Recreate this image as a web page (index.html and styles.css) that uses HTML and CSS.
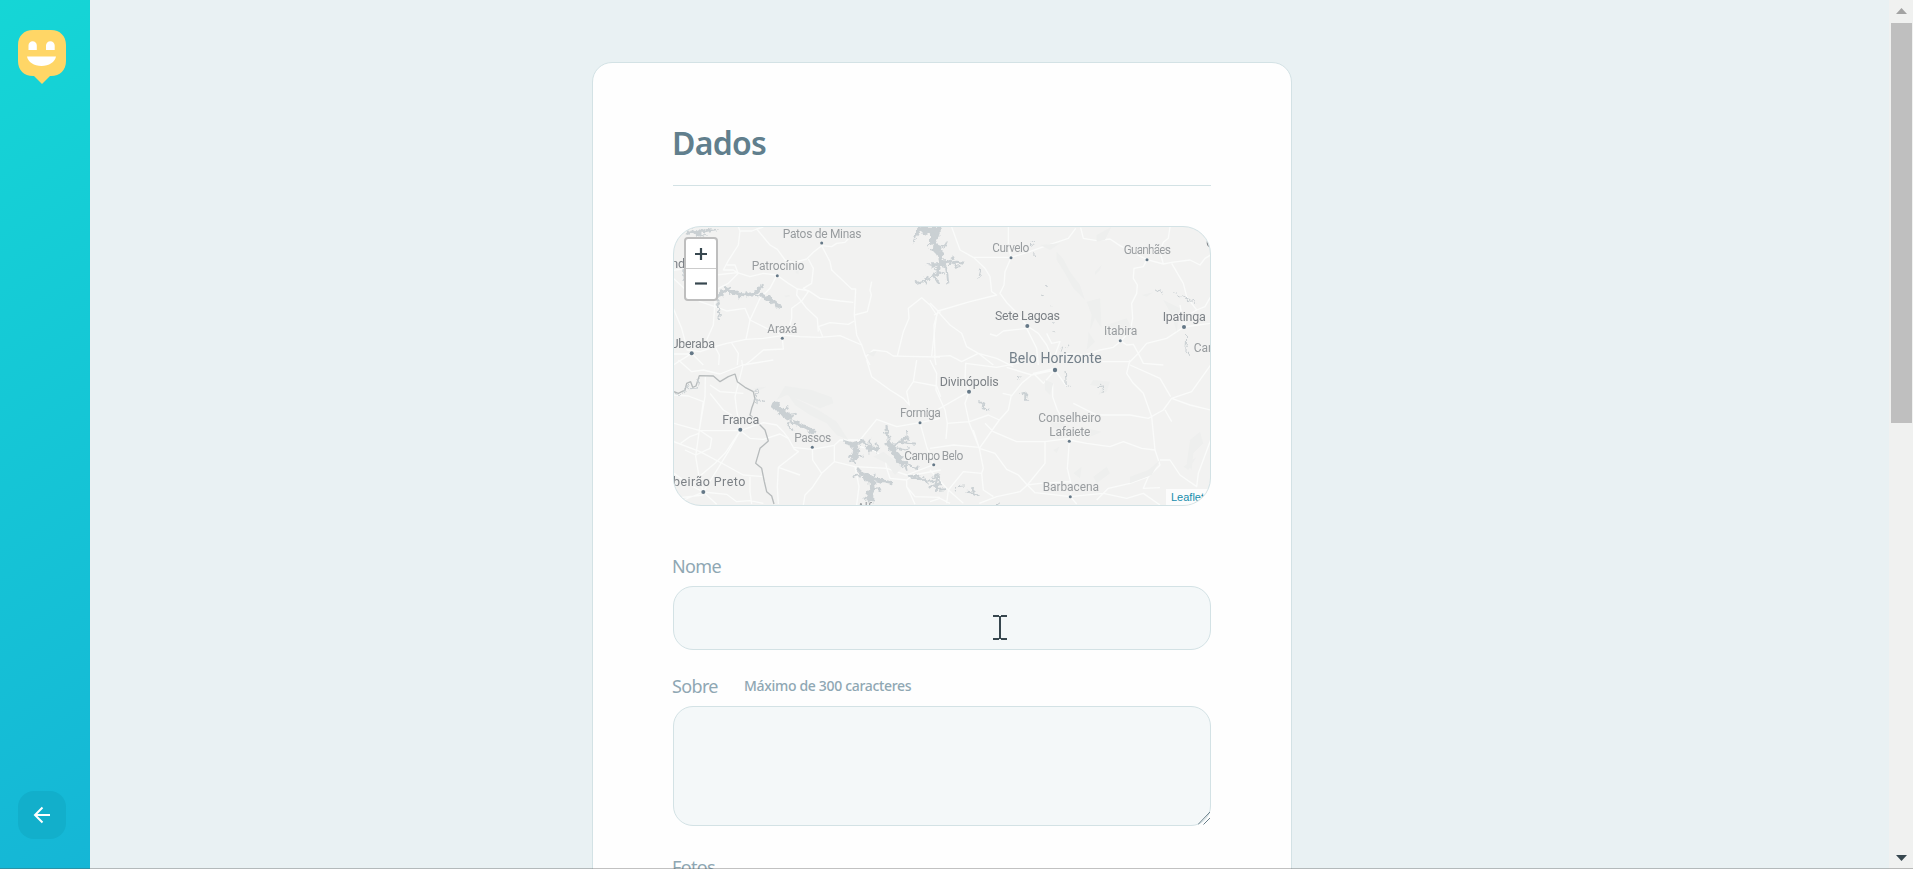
FILE: index.html
```html
<!DOCTYPE html>
<html lang="pt-BR">
<head>
<meta charset="utf-8">
<title>Happy</title>
<link rel="stylesheet" href="styles.css">
</head>
<body>
<div class="page">
  <aside class="sidebar">
    <svg class="logo" width="48" height="54" viewBox="0 0 48 54">
      <path fill="#ffd666" d="M15 0H33C42 0 48 6 48 15V31C48 40 42 46 33 46H32L24 54L16 46H15C6 46 0 40 0 31V15C0 6 6 0 15 0Z"/>
      <path fill="#fff" d="M10.5 20V15.5a4 4 0 0 1 8.300 0V20ZM28 20V15.500a4.200 4.200 0 0 1 8.700 0V20ZM9 26.500H38C37 32 31 36 23.500 36S10 32 9 26.500Z"/>
    </svg>
    <button class="back" type="button" aria-label="Voltar">
      <svg width="24" height="24" viewBox="0 0 24 24"><path d="M20 12H4.500M12.500 4.500L5 12L12.500 19.500"/></svg>
    </button>
  </aside>

  <main class="content">
    <form class="card">
      <h1 class="title">Dados</h1>
      <div class="map">
        <svg class="tiles" viewBox="674 227 536 278">
          <defs>
            <filter id="shore" x="-5%" y="-5%" width="110%" height="110%">
              <feTurbulence type="fractalNoise" baseFrequency=".22" numOctaves="2" seed="4"/>
              <feDisplacementMap in="SourceGraphic" scale="6" xChannelSelector="R" yChannelSelector="G"/>
            </filter>
          </defs>
          <!-- north-west -->
          <g transform="translate(660 215) scale(.33333)">
            <g class="road">
              <path d="M235 35L240 48L276 48L290 42L330 90L352 103L375 135L400 143L440 132L460 112L485 92L515 95L530 85L555 82L575 60L600 50"/>
              <path d="M290 42L310 36M240 48L235 90L205 137L190 165L220 165L235 175L205 205L175 220L165 260L160 330L140 375L125 400"/>
              <path d="M485 92L510 140L515 165L575 222L587 222L583 300L590 360L605 390L617 425L640 405L680 410L700 423L740 424L840 426"/>
              <path d="M635 200L630 225L634 240L622 290L583 300M583 318L565 328L510 323L475 335L480 345L488 365"/>
              <path d="M168 180L232 173L270 185L310 175L350 180L385 205L412 222L445 227L480 250L540 258L580 262"/>
              <path d="M445 132L460 160L455 205L430 220L445 230L425 258L395 280L395 310L385 345L367 362"/>
              <path d="M412 222L410 240L440 280L472 310L475 350M350 182L330 220L300 250L270 315L258 373"/>
              <path d="M40 190L78 225L120 260L165 275L200 288L255 280L270 315L320 340L367 360L420 365L480 367L540 362L605 390"/>
              <path d="M40 280L65 340L82 405L120 410L165 395L200 385L258 373L310 370L367 362M367 370L370 402L310 405L275 435L255 450"/>
              <path d="M95 415L130 450M95 415L40 450M42 417H95M165 395L178 420L176 450M215 384L235 415L232 450M617 425L630 450M712 423L730 350L747 310L745 280L785 248L810 270L830 300L824 345L815 423M822 300L842 290M823 420L828 450M40 166L80 160M200 150H225L234 174"/>
            </g>
            <path class="terrain" d="M372 242L388 239L390 244L377 247ZM405 170L417 165L415 178ZM620 415L650 408L640 425Z"/>
          </g>
          <!-- north-east -->
          <g transform="translate(930 215) scale(.33333)">
            <g class="road">
              <path d="M65 36L90 105L130 127H243L290 113L350 92L415 70L437 40M235 36V90L243 128L225 170L222 210L210 235L232 265L252 285L292 333L325 355L350 390L375 450"/>
              <path d="M130 127L165 160L180 185L185 230L200 240L120 260L24 288L0 264M24 288L12 330L15 425L60 422L95 440L145 415L190 450M24 290L60 330L95 355L110 395L145 415L200 430L250 455"/>
              <path d="M180 357L200 363L220 348L290 340L320 400L325 450M452 38L460 70L500 77L540 72L570 92L651 134L700 147L725 142L780 135L810 150L825 130L842 120M720 36L715 70L700 82L690 110L700 147M725 145L760 205L770 245L800 285L825 275L842 245"/>
              <path d="M651 134L640 155L612 160L610 190L622 210L620 235L605 265L608 310L600 350L570 380L550 397L510 405L465 420L400 415M571 377L590 390L610 388L625 415L650 385L710 370L762 336L842 325M762 336L775 300L800 285M762 336L750 270M625 415L640 445L700 450M625 415L600 440L515 440M375 420L390 380L365 385L350 355"/>
            </g>
            <path class="terrain" d="M380 110L400 132L420 170L450 210L465 255L430 220L405 175L380 135ZM470 260L510 250L515 340L495 310L480 345L485 300ZM330 90L390 85L360 105ZM500 60L545 35L525 75L500 80ZM700 255L750 280L740 350L725 300ZM530 330L590 310L610 350L550 360ZM475 350L495 380L470 405L475 370ZM495 170L515 150L510 165L495 180ZM635 240L670 232L650 245Z"/>
          </g>
          <!-- south-west -->
          <g transform="translate(660 360) scale(.33333)">
            <g class="road">
              <path d="M136 50L135 110L118 210L107 290L117 350L130 396L205 275L241 212L230 150L225 110L248 20L245 0M42 105L85 108L130 125L118 210M42 190L120 212H241L270 235L310 238L360 222L385 235L400 262L457 268L523 256L540 240H600L650 178L710 200L780 188L840 175"/>
              <path d="M42 245L120 275L190 312L250 345L310 350M117 350L165 310L195 280L241 212M62 250L90 230L117 220M118 210L155 235L150 265L107 285L75 270M55 0L95 35L130 30L180 42L248 15L340 0M250 100L180 95L150 75M150 100L190 150L215 165M241 212L275 200L310 188L350 195L370 215L385 235"/>
              <path d="M400 265L415 275L355 322L352 380L355 432M355 322L420 345M457 262L458 300L485 340L455 385L435 405L430 435M523 256V305L485 340M523 305L585 320L680 325M585 320L597 380L590 435M620 0L635 50L690 90L730 115L748 135L740 95L760 65L770 0M760 65L830 78L842 110M780 188L800 260L821 314L740 345L680 325L675 295L640 270L600 260M680 325L690 355L740 360V380L765 410L840 412M740 360L760 345L842 330M740 380L750 400L765 433M130 396L42 432M130 396L170 433M130 396L200 403L230 425L270 422L310 430M270 350V395L275 432M42 340L90 375L130 396M42 415L130 405"/>
            </g>
            <path class="terrain" d="M375 78L455 90L515 112L520 130L480 145L420 120L380 105L350 120ZM385 105L475 150L530 185L565 240L530 225L500 190L450 165L405 135ZM640 290L670 275L730 320L705 345L680 310ZM280 85L320 80L300 90Z"/>
            <path class="river border" d="M42 95L55 100L75 90L80 70L92 65L98 82L108 78L118 47L160 48L180 65L205 50L225 42L232 65L255 82L280 95L285 118L275 145L270 165L300 195L315 210L325 243L300 265L287 310L305 325L313 365L320 395L335 408L342 432"/>
          </g>
          <!-- south-east -->
          <g transform="translate(930 360) scale(.33333)">
            <g class="road">
              <path d="M0 0L20 40L18 90L45 150L52 190L48 237M0 162L117 95L105 60L107 10L200 22L260 10L300 0M117 95L105 130L118 190L148 265L130 210M52 190L118 185L175 165L208 180L235 150L243 110L275 70L305 45L375 30L410 80M375 30L340 70L310 40L375 25M230 22L305 45M218 100L248 107"/>
              <path d="M208 180L148 265L160 325L155 340L100 335L55 390L50 430M148 265L195 280L230 328L265 345L292 375L345 310V245L260 245L190 215L165 190M345 245L418 235L410 200L382 150L368 110V70M418 240L470 250L540 260L580 245L635 265L675 270L665 170L640 100L610 70L590 40L600 0M430 130L500 165L600 165L655 175L700 150L725 115L785 95L842 15M725 115L780 135L842 150M600 15L690 55L722 110M705 150L725 185M418 244L412 325L425 380L421 410L440 432M421 410L520 400L590 415L640 400L690 435M292 375L270 395L200 410L148 430M292 375L330 370L420 365M292 375L315 398L421 410M675 270L690 315L655 350L640 385L690 383M690 300L720 300L750 345L800 380L805 340L842 240M655 350L600 370L535 385L500 420M155 340L160 390L190 410M55 390L100 430M55 390L0 330M0 265L70 255L148 262M0 425L30 415L60 430"/>
            </g>
            <path class="terrain" d="M490 60L540 65L530 95L505 105L515 80L480 75ZM780 240L810 215L820 250L790 280L785 330L770 310ZM455 200L515 215L470 235ZM345 60L370 70L360 105L345 90ZM600 350L655 330L690 300L665 345L600 370ZM490 350L530 320L540 340L500 370ZM370 270L388 260L380 280ZM355 180L420 195L410 220L370 205ZM760 320L800 290L775 330ZM430 340L455 320L450 355Z"/>
          </g>
          <!-- reservoirs and rivers -->
          <g filter="url(#shore)">
            <g transform="translate(660 215) scale(.33333)">
              <path class="water" d="M76 44L90 50L98 39L110 48L120 40L135 47L150 40L180 44L150 49L125 54L145 68L126 60L112 65L100 55L85 60ZM765 40L785 35H842V62L815 50L800 60L780 50L755 90L765 60ZM70 160H78V202L70 190Z"/>
              <path class="river thick" d="M170 245L184 240L190 228L200 221L216 230L235 235L250 238L275 237L292 228L300 218M300 239L325 250L345 265L364 278"/>
              <path class="river branch" d="M175 240L172 260L178 280L175 315M195 230L210 215M235 230L238 250M260 228L262 250M280 239L300 245M292 222L310 209M325 240V258M345 265L350 280M205 218L208 240M765 205L800 195L842 170M800 185L795 205M800 148H842M820 180L835 205"/>
            </g>
            <g transform="translate(930 215) scale(.33333)">
              <path class="water" d="M0 36L22 42L28 60L18 75L30 95L38 110L35 125L52 140L46 160L32 155L28 170L15 165L25 145L20 120L8 105L10 90L0 80Z"/>
              <path class="river branch" d="M28 100L45 92L50 80M20 110L0 105M45 145L60 137L75 125M50 145L80 140L104 143M68 142L78 155L95 152M48 155L52 178L55 205M30 165L0 188M25 60L-20 40M25 148L0 155M20 75L-10 95M22 170L42 180"/>
              <path class="river" d="M150 162L145 182L155 175L145 195M677 221L700 235M730 233L752 243M755 245L800 263M770 360L768 410L776 420M335 240L345 243M370 322L375 325M368 348L372 352M300 80H315M300 92L315 88M310 115L315 125M390 410L395 395M410 398L415 392M345 208L350 212M362 270L366 273"/>
            </g>
            <g transform="translate(660 360) scale(.33333)">
              <path class="river" d="M42 100L58 104L80 88L85 72L90 86L112 84L118 52M280 95L295 90L285 118L310 125L314 132M280 120L292 128L290 112"/>
              <path class="river wide" d="M337 132L355 145L365 158L383 168L390 178M580 252L588 270L580 298M680 245L695 262L705 280L720 300L735 315M610 345L635 360L637 385L630 400L630 432"/>
              <path class="river thick" d="M390 182L415 192L440 205L464 218M550 245L575 253L600 248M615 262L660 268M632 355L660 362L700 370M590 325L610 345"/>
              <path class="river branch" d="M337 135L345 122L355 132M365 158L375 150L385 140M345 150L338 140M375 167L410 161M388 190L385 205L402 210M600 250L610 240L630 260M628 237L635 262L625 280M650 250L652 280M565 290H608M568 300L590 305M679 198L687 245L700 260L740 230L738 210M672 215L690 230M715 245L768 251M730 235L750 240M710 265L730 270L752 263M720 300L755 320L775 324M735 310L740 332M635 355L645 340M635 390L655 385L662 395M635 400L612 418M578 350L600 345M745 347L760 353L780 350L800 365L842 360M820 345L835 352L825 380L842 372"/>
            </g>
            <g transform="translate(930 360) scale(.33333)">
              <path class="river branch" d="M145 125L160 130L158 145L178 150M275 105L293 100L285 115L290 122M5 355L25 345L30 370L15 390L45 388M0 375L20 385M110 395L135 400L125 385L145 410"/>
              <path class="river" d="M258 50L270 48L265 62M405 30L410 80M415 80L422 76M505 80L522 78L515 97M75 395L80 380L105 378M198 430L210 434"/>
            </g>
          </g>
          <g class="label">
            <text x="782.700" y="237.700" textLength="78.700">Patos de Minas</text>
            <text x="751.700" y="270.300" textLength="52.700">Patrocínio</text>
            <text x="767.300" y="333" textLength="30">Araxá</text>
            <text x="992.300" y="252.300" textLength="37">Curvelo</text>
            <text x="1123.700" y="254.300" textLength="47.300">Guanhães</text>
            <text x="1104" y="335" textLength="33.300">Itabira</text>
            <text x="1193.700" y="351.700">Caratinga</text>
            <text x="794.300" y="441.700" textLength="37">Passos</text>
            <text x="900" y="417.300" textLength="40.700">Formiga</text>
            <text x="904.300" y="460" textLength="59">Campo Belo</text>
            <text x="1038.300" y="422" textLength="62.700">Conselheiro</text>
            <text x="1049.300" y="436" textLength="41">Lafaiete</text>
            <text x="1042.700" y="491" textLength="56.300">Barbacena</text>
            <text x="857" y="512">Alfenas</text>
          </g>
          <g class="label city">
            <text x="695" y="267.700" text-anchor="end">Uberlândia</text>
            <text x="670.500" y="348.300" textLength="44.500">Uberaba</text>
            <text x="995" y="320" textLength="65">Sete Lagoas</text>
            <text x="1162.700" y="321" textLength="43">Ipatinga</text>
            <text x="722.300" y="424" textLength="37">Franca</text>
            <text x="745.300" y="485.700" text-anchor="end" textLength="84">Ribeirão Preto</text>
            <text x="939.700" y="386" textLength="59">Divinópolis</text>
            <text x="1206" y="247">G</text>
            <text class="capital" x="1009" y="363.300" textLength="92.700">Belo Horizonte</text>
          </g>
          <g class="dot">
            <circle cx="821.700" cy="243" r="1.500"/><circle cx="777.300" cy="275.700" r="1.500"/><circle cx="782.300" cy="338.300" r="1.500"/>
            <circle cx="1011" cy="257.700" r="1.500"/><circle cx="1147" cy="259.700" r="1.500"/><circle cx="1120.300" cy="340.700" r="1.500"/>
            <circle cx="812.300" cy="447.300" r="1.500"/><circle cx="920" cy="422.700" r="1.500"/><circle cx="933.700" cy="464.700" r="1.500"/>
            <circle cx="1069.300" cy="441.300" r="1.500"/><circle cx="1070.300" cy="496.700" r="1.500"/>
            <circle cx="691.700" cy="353.300" r="2"/><circle cx="1027.300" cy="326" r="2"/><circle cx="1184" cy="327" r="2"/>
            <circle cx="1055" cy="370" r="2.200"/><circle cx="740.300" cy="429.700" r="2"/><circle cx="703.300" cy="492" r="2"/><circle cx="969" cy="391.700" r="2"/>
          </g>
        </svg>
        <div class="zoom">
          <span class="zoom-button"><svg width="12" height="12"><path d="M0 6H12M6 0V12"/></svg></span>
          <span class="zoom-button"><svg width="12" height="12"><path d="M0 5.500H12"/></svg></span>
        </div>
        <div class="attribution">Leaflet</div>
      </div>

      <div class="field">
        <label class="caption" for="name"><span class="name">Nome</span></label>
        <input class="control" id="name">
      </div>
      <div class="field">
        <label class="caption" for="about"><span class="name">Sobre</span><span class="hint">Máximo de 300 caracteres</span></label>
        <div class="control area" id="about">
          <svg class="grip" width="12" height="14"><path d="M0 13.500L12 1M5.500 13.500L12 7"/></svg>
        </div>
      </div>
      <div class="field photos">
        <label class="caption"><span class="name">Fotos</span></label>
      </div>
    </form>
  </main>

  <div class="scrollbar">
    <svg width="11" height="6"><path fill="#a3a3a3" d="M0 6L5.500 0L11 6Z"/></svg>
    <div class="thumb"></div>
    <svg class="down" width="11" height="6"><path fill="#37474f" d="M0 0L5.500 6L11 0Z"/></svg>
  </div>
  <svg class="cursor" width="14" height="25"><path d="M0 1H6M8 1H14M7 1V24M0 24H6M8 24H14"/></svg>
  <div class="edge"></div>
</div>
</body>
</html>
```

FILE: styles.css
```css
* { box-sizing: border-box; margin: 0; }
body { overflow: hidden; background: #e9f1f3; font-family: "Noto Sans", "Open Sans", sans-serif; }
.page { position: relative; display: flex; height: 869px; overflow: hidden; }

.sidebar { display: flex; flex-direction: column; align-items: flex-start; justify-content: space-between; width: 90px; padding: 30px 18px; background: linear-gradient(329.54deg, #15b6d6 0%, #15d6d6 100%); }
.logo { display: block; }
.back { display: flex; align-items: center; justify-content: center; width: 48px; height: 48px; padding: 0; border: 0; border-radius: 16px; background: #12afcb; }
.back path { fill: none; stroke: #fff; stroke-width: 2; }

.content { flex: 1; padding: 62px 0 0 502px; }
.card { width: 700px; height: 1400px; padding: 0 80px; border: 1px solid #d3e2e5; border-radius: 20px; background: #fefefe; }
.title { height: 123px; margin-bottom: 40px; padding-top: 58px; border-bottom: 1px solid #d3e2e5; color: #617f8d; font-size: 32px; font-weight: 600; line-height: 44px; letter-spacing: -0.700px; text-indent: -1px; }

.map { position: relative; height: 280px; margin-bottom: 48px; overflow: hidden; border: 1px solid #d3e2e5; border-radius: 28px; background: #f2f2f1; }
.tiles { display: block; width: 536px; height: 278px; }
.road { fill: none; stroke: #fafbfa; stroke-width: 4; stroke-linejoin: round; }
.water { fill: #cad0d3; }
.terrain { fill: #eeefee; }
.river { fill: none; stroke: #c8ced1; stroke-width: 3; stroke-linejoin: bevel; }
.river.border { stroke: #b7bbbc; stroke-width: 4; }
.river.branch { stroke: #cad0d3; stroke-width: 6; }
.river.thick { stroke: #cad0d3; stroke-width: 11; }
.river.wide { stroke: #cad0d3; stroke-width: 20; }
.label { fill: #989c9f; stroke: #f2f2f1; stroke-width: 2px; paint-order: stroke; font: 12px Roboto, sans-serif; }
.label.city { fill: #7c8186; font-size: 12.500px; }
.label .capital { fill: #74808a; font-size: 14px; }
.dot { fill: #657887; }

.zoom { position: absolute; top: 10px; left: 10px; width: 34px; border: 2px solid #bebebe; border-radius: 4px; background: #fff; }
.zoom-button { display: flex; align-items: center; justify-content: center; height: 30px; }
.zoom-button:first-child { border-bottom: 1px solid #ccc; }
.zoom-button path { stroke: #37474f; stroke-width: 2.200; }
.attribution { position: absolute; right: 0; bottom: 0; height: 16px; padding: 0 6px 0 5px; background: #fcfcfc; color: #168dad; font: 11px/16px "Liberation Sans", sans-serif; }

.field { margin-bottom: 24px; }
.photos { padding-top: 5px; }
.caption { display: flex; gap: 24px; height: 32px; color: #8fa7b3; font-size: 18px; line-height: 24px; text-indent: -1px; }
.name { width: 48px; letter-spacing: -0.650px; }
.hint { font-size: 14px; font-weight: 500; letter-spacing: -0.320px; }
.control { display: block; width: 100%; height: 64px; border: 1px solid #d3e2e5; border-radius: 20px; background: #f4f8f9; }
.area { position: relative; height: 120px; }
.grip { position: absolute; right: 0; bottom: 0; fill: none; stroke: #697f89; }

.scrollbar { display: flex; flex-direction: column; align-items: center; width: 24px; padding: 8px 1px 8px 2px; background: #f0f1f0; }
.thumb { align-self: stretch; height: 400px; margin-top: 9px; background: #bfbfbf; }
.down { margin-top: auto; }

.cursor { position: absolute; top: 615px; left: 993px; fill: none; stroke: #37474f; stroke-width: 2; }
.edge { position: absolute; right: 0; bottom: 0; left: 0; height: 1px; background: rgba(80, 80, 80, .35); }
```
